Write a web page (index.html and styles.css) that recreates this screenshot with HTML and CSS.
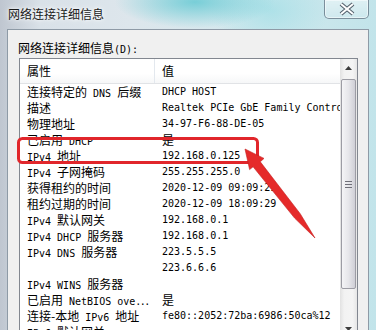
FILE: index.html
```html
<!DOCTYPE html>
<html lang="zh-CN">
<head>
  <meta charset="UTF-8">
  <title>网络连接详细信息</title>
  <link rel="stylesheet" href="styles.css">
</head>
<body>
  <div class="window">
    <div class="titlebar">
      <span class="title">网络连接详细信息</span>
      <div class="close">
        <svg width="45" height="19" viewBox="0 0 45 19">
          <path d="M17 5 L29 15 M29 5 L17 15" stroke="#55626e" stroke-width="4.2" fill="none"/>
          <path d="M17 5 L29 15 M29 5 L17 15" stroke="#ffffff" stroke-width="2" fill="none"/>
        </svg>
      </div>
    </div>

    <div class="client">
      <div class="label">网络连接详细信息<span class="en">(D):</span></div>

      <div class="list">
        <div class="view">
          <div class="head">
            <div class="cell name">属性</div>
            <div class="cell val">值</div>
          </div>
          <div class="row"><div class="cell name">连接特定的<span class="en"> DNS </span>后缀</div><div class="cell val en">DHCP HOST</div></div>
          <div class="row"><div class="cell name">描述</div><div class="cell val en">Realtek PCIe GbE Family Controller</div></div>
          <div class="row"><div class="cell name">物理地址</div><div class="cell val en">34-97-F6-88-DE-05</div></div>
          <div class="row"><div class="cell name">已启用<span class="en"> DHCP</span></div><div class="cell val">是</div></div>
          <div class="row"><div class="cell name"><span class="en">IPv4 </span>地址</div><div class="cell val en">192.168.0.125</div></div>
          <div class="row"><div class="cell name"><span class="en">IPv4 </span>子网掩码</div><div class="cell val en">255.255.255.0</div></div>
          <div class="row"><div class="cell name">获得租约的时间</div><div class="cell val en">2020-12-09 09:09:29</div></div>
          <div class="row"><div class="cell name">租约过期的时间</div><div class="cell val en">2020-12-09 18:09:29</div></div>
          <div class="row"><div class="cell name"><span class="en">IPv4 </span>默认网关</div><div class="cell val en">192.168.0.1</div></div>
          <div class="row"><div class="cell name"><span class="en">IPv4 DHCP </span>服务器</div><div class="cell val en">192.168.0.1</div></div>
          <div class="row"><div class="cell name"><span class="en">IPv4 DNS </span>服务器</div><div class="cell val en">223.5.5.5</div></div>
          <div class="row"><div class="cell name"></div><div class="cell val en">223.6.6.6</div></div>
          <div class="row"><div class="cell name"><span class="en">IPv4 WINS </span>服务器</div><div class="cell val"></div></div>
          <div class="row"><div class="cell name">已启用<span class="en"> NetBIOS ove<span class="dots">...</span></span></div><div class="cell val">是</div></div>
          <div class="row"><div class="cell name">连接-本地<span class="en"> IPv6 </span>地址</div><div class="cell val en">fe80::2052:72ba:6986:50ca%12</div></div>
          <div class="row"><div class="cell name"><span class="en">IPv6 </span>默认网关</div><div class="cell val"></div></div>
        </div>

        <div class="scroll">
          <div class="arrow">
            <svg width="7" height="4" viewBox="0 0 7 4"><polygon points="3.5,0 7,4 0,4" fill="#3c3c3c"/></svg>
          </div>
          <div class="thumb"><span class="grip"></span></div>
          <div class="track"></div>
          <div class="arrow">
            <svg width="7" height="4" viewBox="0 0 7 4"><polygon points="0,0 7,0 3.5,4" fill="#3c3c3c"/></svg>
          </div>
        </div>
      </div>
    </div>

    <!-- red annotation drawn over the dialog -->
    <svg class="mark" width="376" height="330" viewBox="0 0 376 330">
      <rect x="18.5" y="138.5" width="239" height="24" rx="4" fill="none" stroke="#e1262b" stroke-width="3"/>
      <polygon points="245,149 264,158.4 260.3,161.8 300.2,213.7 315,238 294.6,218.1 253.1,166.8 249.6,169.6"
               fill="#e52a2a" stroke="#c41d1d" stroke-width="0.6"/>
    </svg>
  </div>
</body>
</html>
```

FILE: styles.css
```css
body {
  margin: 0;
  width: 376px;
  height: 330px;
  overflow: hidden;
  background: #fff;
  font-family: "Noto Sans CJK SC", sans-serif;
  font-size: 12px;
  color: #000;
}
.window {
  position: relative;
  height: 330px;
  padding: 0 7px;
  background:
    radial-gradient(ellipse 80px 26px at 195px 2px, rgba(96, 200, 210, 0.8), rgba(96, 200, 210, 0)),
    radial-gradient(ellipse 60px 40px at 270px 10px, rgba(150, 220, 228, 0.6), rgba(150, 220, 228, 0)),
    linear-gradient(to right, #bfc6d0 0, #d9e1e8 40px, #dde6ec 130px, #d2e9ee 260px, #c2e4ea 376px);
  overflow: hidden;
}
.titlebar {
  height: 29px;
  display: flex;
  justify-content: space-between;
  align-items: flex-start;
}
.title {
  padding: 6px 0 0 1px;
  line-height: 16px;
  color: #1a1a1a;
  text-shadow: 0 0 6px #fff, 0 0 3px #fff;
}
.close {
  width: 45px;
  height: 19px;
  box-sizing: border-box;
  border: 1px solid rgba(45, 65, 85, 0.55);
  border-top: none;
  border-radius: 0 0 5px 5px;
  background: linear-gradient(rgba(255, 255, 255, 0.45), rgba(255, 255, 255, 0.15));
  box-shadow: inset 0 0 0 1px rgba(255, 255, 255, 0.5);
}
.close svg {
  display: block;
  margin: -1px 0 0 -1px;
}
.client {
  height: 301px;
  box-sizing: border-box;
  background: #f0f0f0;
  border: 1px solid #8e9aa6;
  border-bottom: none;
  padding: 9px 10px 0 10px;
}
.label {
  line-height: 17px;
}
.en {
  font-family: "DejaVu Sans Mono", monospace;
  font-size: 10px;
}
.dots {
  letter-spacing: -1.5px;
}
.list {
  margin-left: 1px;
  height: 280px;
  box-sizing: border-box;
  border: 1px solid #828790;
  background: #fff;
  display: grid;
  grid-template-columns: 1fr 17px;
}
.view {
  overflow: hidden;
}
.head {
  height: 25px;
  box-sizing: border-box;
  display: grid;
  grid-template-columns: 135px 1fr;
  background: linear-gradient(#ffffff, #ffffff 60%, #f6f7f8);
  border-bottom: 1px solid #e1e3e6;
}
.head .cell {
  line-height: 24px;
}
.head .name {
  border-right: 1px solid #e3e8ee;
}
.row {
  display: grid;
  grid-template-columns: 135px 1fr;
  height: 16px;
  line-height: 16px;
}
.cell {
  padding-left: 7px;
  white-space: nowrap;
  overflow: hidden;
}
.scroll {
  display: flex;
  flex-direction: column;
  background: linear-gradient(to right, #e2e2e2, #f2f2f2 25%, #f4f4f4 75%, #e6e6e6);
}
.arrow {
  height: 17px;
  display: flex;
  align-items: center;
  justify-content: center;
}
.arrow svg {
  display: block;
}
.thumb {
  margin: 3px 1px 0 1px;
  height: 210px;
  box-sizing: border-box;
  border: 1px solid #9c9ca4;
  border-radius: 2px;
  background: linear-gradient(to right, #f4f4f6, #e6e6ea 50%, #cfcfd6);
  display: flex;
  align-items: center;
  justify-content: center;
}
.grip {
  width: 7px;
  height: 7px;
  background: repeating-linear-gradient(#6f6f78 0, #6f6f78 1px, transparent 1px, transparent 3px);
}
.track {
  flex: 1;
}
.mark {
  position: absolute;
  left: 0;
  top: 0;
  pointer-events: none;
}
```
